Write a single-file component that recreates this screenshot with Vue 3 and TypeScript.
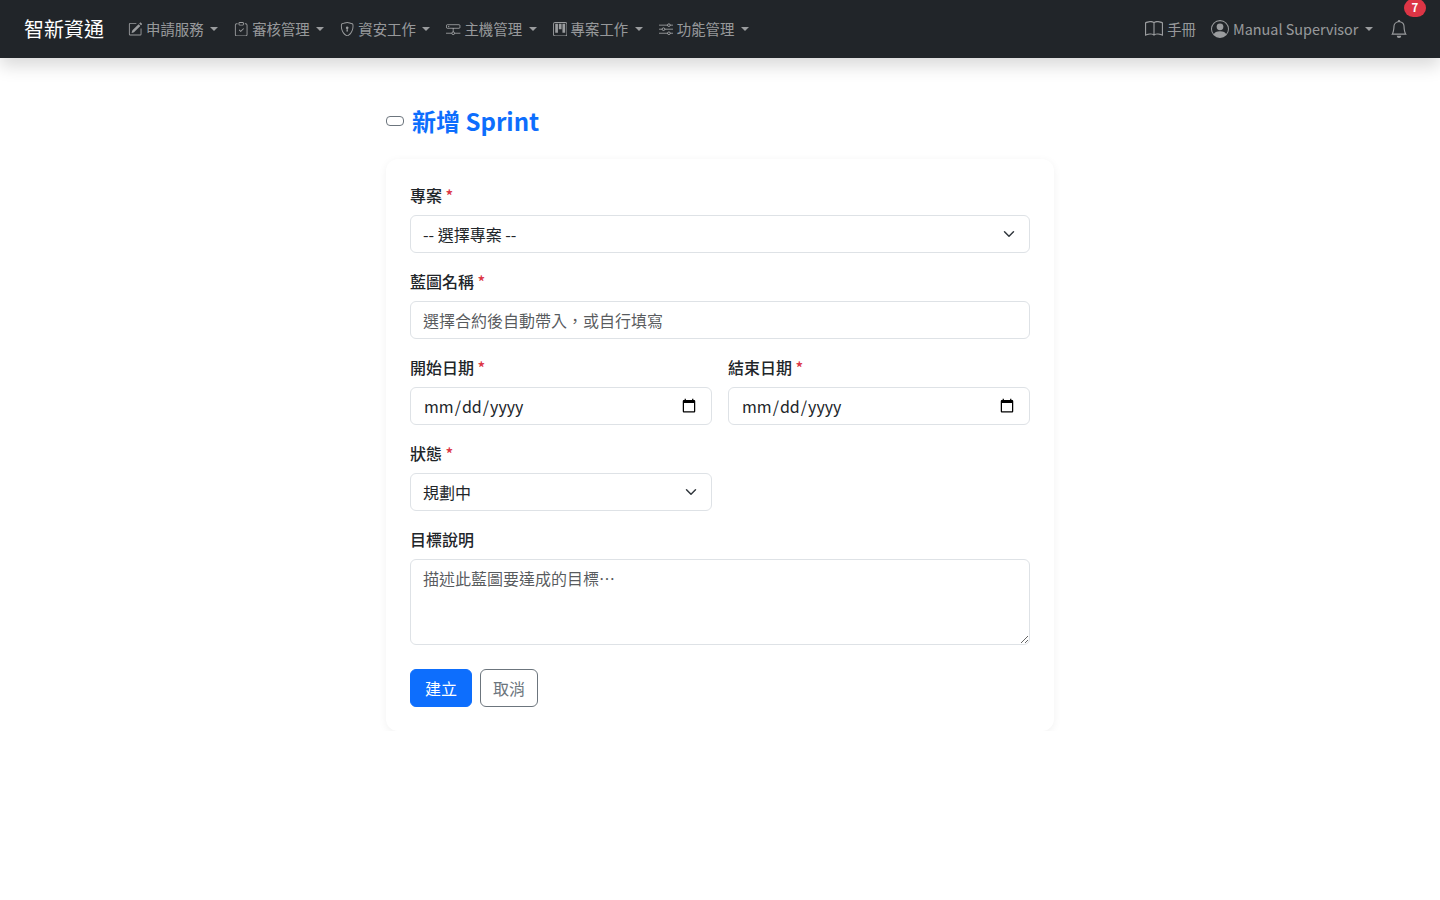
<template>
  <div class="app-root" lang="zh-TW">
    <nav class="navbar">
      <a class="brand">智新資通</a>

      <ul class="nav-list">
        <li v-for="item in menuItems" :key="item.label" class="nav-item">
          <svg class="nav-icon" viewBox="0 0 16 16" fill="currentColor">
            <template v-if="item.icon === 'pencil'">
              <path d="M15.502 1.94a.5.5 0 0 1 0 .706L14.459 3.69l-2-2L13.502.646a.5.5 0 0 1 .707 0l1.293 1.293zm-1.75 2.456-2-2L4.939 9.21a.5.5 0 0 0-.121.196l-.805 2.414a.25.25 0 0 0 .316.316l2.414-.805a.5.5 0 0 0 .196-.12l6.813-6.814z" />
              <path fill-rule="evenodd" d="M1 13.5A1.5 1.5 0 0 0 2.5 15h11a1.5 1.5 0 0 0 1.5-1.5v-6a.5.5 0 0 0-1 0v6a.5.5 0 0 1-.5.5h-11a.5.5 0 0 1-.5-.5v-11a.5.5 0 0 1 .5-.5H9a.5.5 0 0 0 0-1H2.5A1.5 1.5 0 0 0 1 2.5v11z" />
            </template>
            <template v-else-if="item.icon === 'clipboard'">
              <path fill-rule="evenodd" d="M10.854 7.146a.5.5 0 0 1 0 .708l-3 3a.5.5 0 0 1-.708 0l-1.5-1.5a.5.5 0 1 1 .708-.708L7.5 9.793l2.646-2.647a.5.5 0 0 1 .708 0z" />
              <path d="M4 1.5H3a2 2 0 0 0-2 2V14a2 2 0 0 0 2 2h10a2 2 0 0 0 2-2V3.5a2 2 0 0 0-2-2h-1v1h1a1 1 0 0 1 1 1V14a1 1 0 0 1-1 1H3a1 1 0 0 1-1-1V3.5a1 1 0 0 1 1-1h1v-1z" />
              <path d="M9.5 1a.5.5 0 0 1 .5.5v1a.5.5 0 0 1-.5.5h-3a.5.5 0 0 1-.5-.5v-1a.5.5 0 0 1 .5-.5h3zm-3-1A1.5 1.5 0 0 0 5 1.5v1A1.5 1.5 0 0 0 6.5 4h3A1.5 1.5 0 0 0 11 2.5v-1A1.5 1.5 0 0 0 9.5 0h-3z" />
            </template>
            <template v-else-if="item.icon === 'shield'">
              <path d="M5.338 1.59a61.44 61.44 0 0 0-2.837.856.481.481 0 0 0-.328.39c-.554 4.157.726 7.19 2.253 9.188a10.725 10.725 0 0 0 2.287 2.233c.346.244.652.42.893.533.12.057.218.095.293.118a.55.55 0 0 0 .101.025.615.615 0 0 0 .1-.025c.076-.023.174-.061.294-.118.24-.113.547-.29.893-.533a10.726 10.726 0 0 0 2.287-2.233c1.527-1.997 2.807-5.031 2.253-9.188a.48.48 0 0 0-.328-.39c-.651-.213-1.75-.56-2.837-.855C9.552 1.29 8.531 1.067 8 1.067c-.53 0-1.552.223-2.662.524zM5.072.56C6.157.265 7.31 0 8 0s1.843.265 2.928.56c1.11.3 2.229.655 2.887.87a1.54 1.54 0 0 1 1.044 1.262c.596 4.477-.787 7.795-2.465 9.99a11.775 11.775 0 0 1-2.517 2.453 7.159 7.159 0 0 1-1.048.625c-.28.132-.581.24-.829.24s-.548-.108-.829-.24a7.158 7.158 0 0 1-1.048-.625 11.777 11.777 0 0 1-2.517-2.453C1.928 10.487.545 7.169 1.141 2.692A1.54 1.54 0 0 1 2.185 1.43 62.456 62.456 0 0 1 5.072.56z" />
              <path d="M9.5 6.5a1.5 1.5 0 0 1-1 1.415l.385 1.99a.5.5 0 0 1-.491.595h-.788a.5.5 0 0 1-.49-.595l.384-1.99a1.5 1.5 0 1 1 2-1.415z" />
            </template>
            <template v-else-if="item.icon === 'network'">
              <path fill="none" stroke="currentColor" d="M1.5 3h13a1 1 0 0 1 1 1v2a1 1 0 0 1-1 1h-13a1 1 0 0 1-1-1V4a1 1 0 0 1 1-1zM8 7v4M0 12.5h6.3M9.7 12.5H16" />
              <circle cx="8" cy="12.5" r="1.5" fill="none" stroke="currentColor" />
              <circle cx="3" cy="5" r=".7" />
            </template>
            <template v-else-if="item.icon === 'kanban'">
              <path fill-rule="evenodd" d="M2.5 0A2.5 2.5 0 0 0 0 2.500v11A2.500 2.500 0 0 0 2.500 16h11a2.500 2.500 0 0 0 2.500-2.500v-11A2.500 2.500 0 0 0 13.500 0h-11zM1 2.500A1.500 1.500 0 0 1 2.500 1h11A1.500 1.500 0 0 1 15 2.500v11a1.500 1.500 0 0 1-1.500 1.500h-11A1.500 1.500 0 0 1 1 13.500v-11z" />
              <path d="M2.500 2h3v10h-3zM6.500 2h3v6h-3zM10.500 2h3v10h-3z" />
            </template>
            <template v-else>
              <path fill="none" stroke="currentColor" d="M0 3.500h9.500M12.500 3.500H16M0 8h3.500M6.500 8H16M0 12.500h9.500M12.500 12.500H16" />
              <circle cx="11" cy="3.500" r="1.500" fill="none" stroke="currentColor" />
              <circle cx="5" cy="8" r="1.500" fill="none" stroke="currentColor" />
              <circle cx="11" cy="12.500" r="1.500" fill="none" stroke="currentColor" />
            </template>
          </svg>
          <span>{{ item.label }}</span>
          <i class="caret"></i>
        </li>
      </ul>

      <div class="nav-right">
        <a class="nav-link manual-link">
          <svg class="right-icon" viewBox="0 0 16 16" fill="currentColor">
            <path d="M1 2.828c.885-.37 2.154-.769 3.388-.893 1.33-.134 2.458.063 3.112.752v9.746c-.935-.53-2.12-.603-3.213-.493-1.18.12-2.37.461-3.287.811V2.828zm7.5-.141c.654-.689 1.782-.886 3.112-.752 1.234.124 2.503.523 3.388.893v9.923c-.918-.35-2.107-.692-3.287-.81-1.094-.111-2.278-.039-3.213.492V2.687zM8 1.783C7.015.936 5.587.81 4.287.94c-1.514.153-3.042.672-3.994 1.105A.5.5 0 0 0 0 2.500v11a.5.5 0 0 0 .707.455c.882-.4 2.303-.881 3.680-1.020 1.409-.142 2.590.087 3.223.877a.5.5 0 0 0 .780 0c.633-.790 1.814-1.019 3.222-.877 1.378.139 2.800.620 3.681 1.020A.5.5 0 0 0 16 13.500v-11a.5.5 0 0 0-.293-.455c-.952-.433-2.480-.952-3.994-1.105C10.413.809 8.985.936 8 1.783z" />
          </svg>
          <span>手冊</span>
        </a>
        <a class="nav-link user-link">
          <svg class="right-icon" viewBox="0 0 16 16" fill="currentColor">
            <path d="M11 6a3 3 0 1 1-6 0 3 3 0 0 1 6 0z" />
            <path fill-rule="evenodd" d="M0 8a8 8 0 1 1 16 0A8 8 0 0 1 0 8zm8-7a7 7 0 0 0-5.468 11.370C3.242 11.226 4.805 10 8 10s4.757 1.225 5.468 2.370A7 7 0 0 0 8 1z" />
          </svg>
          <span>Manual Supervisor</span>
          <i class="caret"></i>
        </a>
        <a class="nav-link bell-link">
          <svg class="bell-icon" viewBox="0 0 16 16" fill="currentColor">
            <path d="M8 16a2 2 0 0 0 2-2H6a2 2 0 0 0 2 2zM8 1.918l-.797.161A4.002 4.002 0 0 0 4 6c0 .628-.134 2.197-.459 3.742-.16.767-.376 1.566-.663 2.258h10.244c-.287-.692-.502-1.490-.663-2.258C12.134 8.197 12 6.628 12 6a4.002 4.002 0 0 0-3.203-3.920L8 1.917zM14.220 12c.223.447.481.801.780 1H1c.299-.199.557-.553.780-1C2.680 10.200 3 6.880 3 6c0-2.420 1.720-4.440 4.005-4.901a1 1 0 1 1 1.990 0A5.002 5.002 0 0 1 13 6c0 .880.320 4.200 1.220 6z" />
          </svg>
          <span class="badge">7</span>
        </a>
      </div>
    </nav>

    <main class="page">
      <h1 class="page-title">
        <svg class="title-icon" viewBox="0 0 18 10" fill="none" stroke="currentColor">
          <rect x=".5" y=".5" width="17" height="9" rx="3.500" />
        </svg>
        <span>新增 Sprint</span>
      </h1>

      <form class="card" @submit.prevent>
        <div class="field">
          <label class="field-label">專案 <span class="required">*</span></label>
          <select v-model="form.project" class="control select-control">
            <option value="">-- 選擇專案 --</option>
          </select>
        </div>

        <div class="field">
          <label class="field-label">藍圖名稱 <span class="required">*</span></label>
          <input v-model="form.name" class="control" type="text" placeholder="選擇合約後自動帶入，或自行填寫" />
        </div>

        <div class="field-row">
          <div class="field">
            <label class="field-label">開始日期 <span class="required">*</span></label>
            <input v-model="form.startDate" class="control" type="date" />
          </div>
          <div class="field">
            <label class="field-label">結束日期 <span class="required">*</span></label>
            <input v-model="form.endDate" class="control" type="date" />
          </div>
        </div>

        <div class="field-row">
          <div class="field">
            <label class="field-label">狀態 <span class="required">*</span></label>
            <select v-model="form.status" class="control select-control">
              <option v-for="s in statusOptions" :key="s" :value="s">{{ s }}</option>
            </select>
          </div>
        </div>

        <div class="field field-last">
          <label class="field-label">目標說明</label>
          <textarea v-model="form.goal" class="control text-control" rows="3" placeholder="描述此藍圖要達成的目標…"></textarea>
        </div>

        <div class="actions">
          <button class="btn btn-primary" type="submit">建立</button>
          <button class="btn btn-outline" type="button">取消</button>
        </div>
      </form>
    </main>
  </div>
</template>

<script setup lang="ts">
import { reactive } from 'vue'

interface MenuItem {
  label: string
  icon: string
}

const menuItems: MenuItem[] = [
  { label: '申請服務', icon: 'pencil' },
  { label: '審核管理', icon: 'clipboard' },
  { label: '資安工作', icon: 'shield' },
  { label: '主機管理', icon: 'network' },
  { label: '專案工作', icon: 'kanban' },
  { label: '功能管理', icon: 'sliders' }
]

const statusOptions = ['規劃中', '進行中', '已完成']

const form = reactive({
  project: '',
  name: '',
  startDate: '',
  endDate: '',
  status: '規劃中',
  goal: ''
})
</script>

<style>
body {
  margin: 0;
  background: #ffffff;
}
</style>

<style scoped>
.app-root {
  font-family: "Noto Sans CJK TC", "Noto Sans", sans-serif;
  font-size: 16px;
  line-height: 1.5;
  color: #212529;
}

.navbar {
  display: flex;
  align-items: center;
  height: 58px;
  padding: 0 24px;
  box-sizing: border-box;
  background: #212529;
  box-shadow: 0 8px 16px rgba(0, 0, 0, 0.15);
  position: relative;
}

.brand {
  font-size: 20px;
  color: #ffffff;
  margin-right: 16px;
}

.nav-list {
  display: flex;
  list-style: none;
  margin: 0;
  padding: 0;
}

.nav-item {
  display: flex;
  align-items: center;
  padding: 0 8px;
  font-size: 14.4px;
  color: rgba(255, 255, 255, 0.55);
  white-space: nowrap;
}

.nav-icon {
  width: 14.4px;
  height: 14.4px;
  margin-right: 3.6px;
}

.caret {
  display: inline-block;
  margin-left: 6.6px;
  border-top: 4.32px solid;
  border-left: 4.32px solid transparent;
  border-right: 4.32px solid transparent;
}

.nav-right {
  display: flex;
  align-items: center;
  margin-left: auto;
}

.nav-link {
  display: flex;
  align-items: center;
  font-size: 14.4px;
  color: rgba(255, 255, 255, 0.55);
  white-space: nowrap;
}

.right-icon {
  width: 18px;
  height: 18px;
  margin-right: 4px;
}

.manual-link {
  margin-right: 15px;
}

.user-link {
  margin-right: 17px;
}

.bell-link {
  position: relative;
  margin-right: 8px;
}

.bell-icon {
  width: 18px;
  height: 18px;
}

.badge {
  position: absolute;
  left: 14px;
  top: -21px;
  min-width: 22px;
  height: 18px;
  line-height: 16px;
  text-align: center;
  border-radius: 9px;
  background: #dc3545;
  color: #ffffff;
  font-size: 11.5px;
  font-weight: 700;
}

.page {
  width: 668px;
  margin: 0 auto;
  padding-top: 46px;
}

.page-title {
  display: flex;
  align-items: center;
  gap: 8px;
  margin: 0 0 20px;
  font-size: 24px;
  font-weight: 700;
  line-height: 1.45;
  color: #0d6efd;
}

.title-icon {
  width: 18px;
  height: 10px;
  color: #6c757d;
}

.card {
  padding: 24px;
  border-radius: 12px;
  background: #ffffff;
  box-shadow: 0 2px 8px rgba(0, 0, 0, 0.06);
}

.field {
  display: flex;
  flex-direction: column;
  margin-bottom: 16px;
  min-width: 0;
}

.field-last {
  margin-bottom: 24px;
}

.field-row {
  display: grid;
  grid-template-columns: 1fr 1fr;
  column-gap: 16px;
}

.field-label {
  margin-bottom: 8px;
  font-weight: 500;
  height: 24px;
}

.required {
  color: #dc3545;
}

.control {
  box-sizing: border-box;
  width: 100%;
  height: 38px;
  padding: 6px 12px;
  border: 1px solid #dee2e6;
  border-radius: 6px;
  background-color: #ffffff;
  color: #212529;
  font-family: inherit;
  font-size: 16px;
  line-height: 1.5;
  outline: none;
}

.control::placeholder {
  color: rgba(33, 37, 41, 0.75);
}

.select-control {
  appearance: none;
  padding-right: 36px;
  background-image: url("data:image/svg+xml,%3csvg xmlns='http://www.w3.org/2000/svg' viewBox='0 0 16 16'%3e%3cpath fill='none' stroke='%23343a40' stroke-linecap='round' stroke-linejoin='round' stroke-width='2' d='m2 5 6 6 6-6'/%3e%3c/svg%3e");
  background-repeat: no-repeat;
  background-position: right 12px center;
  background-size: 16px 12px;
}

.text-control {
  display: block;
  height: 86px;
  resize: vertical;
}

.actions {
  display: flex;
  gap: 8px;
}

.btn {
  height: 38px;
  padding: 6px 12px;
  box-sizing: border-box;
  border-radius: 6px;
  border: 1px solid;
  font-family: inherit;
  font-size: 16px;
  line-height: 1.5;
  cursor: pointer;
}

.btn-primary {
  width: 62px;
  background: #0d6efd;
  border-color: #0d6efd;
  color: #ffffff;
}

.btn-outline {
  width: 58px;
  background: #ffffff;
  border-color: #6c757d;
  color: #6c757d;
}
</style>
